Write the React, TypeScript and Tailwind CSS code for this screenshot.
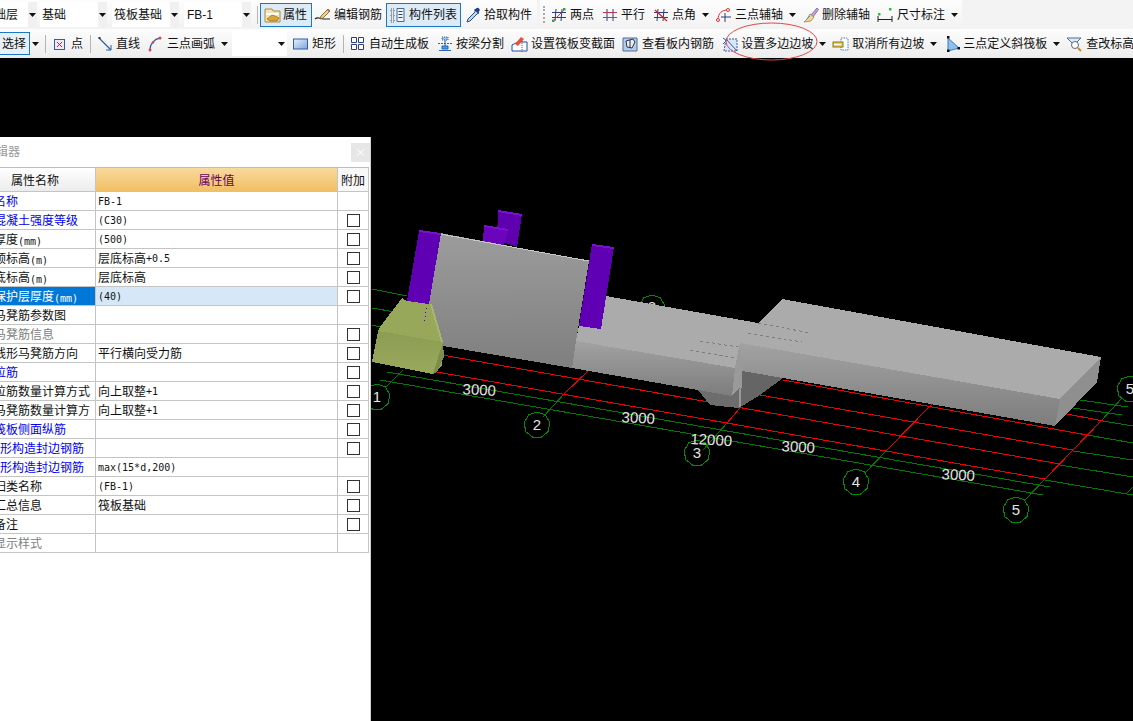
import React from "react";

const Blue = "#2f5fa8";

const Ic = ({ w = 16, children }: { w?: number; children: React.ReactNode }) => (
  <svg width={w} height={16} viewBox={`0 0 ${w} 16`} className="shrink-0" fill="none">
    {children}
  </svg>
);

const Arrow = ({ className = "" }: { className?: string }) => (
  <svg width="7" height="4" viewBox="0 0 7 4" className={`shrink-0 ${className}`}>
    <path d="M0 0h7L3.5 4z" fill="#111" />
  </svg>
);

const Combo = ({ label, className = "", textClass = "pl-[2px]" }: { label: string; className?: string; textClass?: string }) => (
  <div className={`h-[25px] flex items-center justify-between bg-white shrink-0 overflow-hidden ${className}`}>
    <span className={`whitespace-nowrap ${textClass}`}>{label}</span>
    <span className="w-[9px] h-full bg-[#f0f0f0] flex items-center justify-center">
      <Arrow />
    </span>
  </div>
);

const Tool = ({
  icon,
  label,
  className = "",
  gap = "gap-[3px]",
  arrow = false,
}: {
  icon: React.ReactNode;
  label: string;
  className?: string;
  gap?: string;
  arrow?: boolean;
}) => (
  <div className={`flex items-center shrink-0 whitespace-nowrap ${className}`}>
    <div className={`flex items-center ${gap}`}>
      {icon}
      <span>{label}</span>
    </div>
    {arrow && <Arrow className="ml-[6px]" />}
  </div>
);

const Sep = ({ className = "" }: { className?: string }) => <div className={`w-px h-[18px] bg-[#b5b5b5] shrink-0 ${className}`} />;

const Hash = ({ c = "#2a3f7a" }: { c?: string }) => (
  <path d="M5 2L4 14M11 2L10 14M1 5.5H15M1 10.5H15" stroke={c} strokeWidth="1" />
);

const icons = {
  attr: (
    <Ic w={17}>
      <path d="M1 2h7l1 2h7v11H1z" fill="#f7e3b0" stroke="#a98a4a" />
      <path d="M2 6h13v2H2z" fill="#fff" />
      <path d="M3 12l5-4 3 1 4 2-2 3H6z" fill="#d9a53a" stroke="#8a6a20" strokeWidth=".7" />
    </Ic>
  ),
  edit: (
    <Ic w={17}>
      <path d="M1 12c3-3 5 0 8 0h7" stroke="#222" strokeWidth="1.2" />
      <path d="M7 9l7-7 2 2-7 7-3 1z" fill="#f3d27a" stroke="#6b5a2a" strokeWidth=".8" />
      <path d="M13 3l2 2 1-1-2-2z" fill="#d9534f" />
    </Ic>
  ),
  list: (
    <Ic w={15}>
      <path d="M1 2h3v3H1zM1 7h3v3H1zM1 12h3v3H1z" stroke="#555" strokeDasharray="1 1" />
      <path d="M7 1.5h7v13H7z" fill="#eef4fb" stroke="#4a6a90" />
      <path d="M8.5 4.5h4M8.5 7.5h4M8.5 10.5h4" stroke="#345" />
    </Ic>
  ),
  pick: (
    <Ic w={15}>
      <path d="M9 2l4 4-2 1-7 7-3 1 1-3 7-7z" fill="#bcd9f5" stroke="#234e8e" />
      <path d="M10 1.5c1-1 2-1 3 0s1 2 0 3l-1.5 1.5-3-3z" fill="#1d3f8a" />
    </Ic>
  ),
  twoPt: (
    <Ic>
      <Hash />
      <path d="M2 14L14 2" stroke="#d33" />
      <rect x="1" y="12.5" width="2.5" height="2.5" fill="#3a3" />
      <rect x="12" y="1" width="2.5" height="2.5" fill="#3a3" />
    </Ic>
  ),
  parallel: (
    <Ic>
      <path d="M5 2V14M11 2V14" stroke="#2a3f7a" />
      <path d="M1 5.5H15M1 10.5H15" stroke="#c0394a" />
    </Ic>
  ),
  angle: (
    <Ic>
      <Hash />
      <path d="M2 3L14 14" stroke="#d22" strokeWidth="1.3" />
    </Ic>
  ),
  arcAxis: (
    <Ic>
      <path d="M2 13C2 6 6 3 12 3" stroke="#d33" />
      <circle cx="12" cy="3" r="1.5" fill="#fff" stroke="#d33" />
      <circle cx="2" cy="13" r="1.5" fill="#fff" stroke="#d33" />
      <path d="M9 6V15M5 10H15" stroke="#2a3f7a" />
    </Ic>
  ),
  del: (
    <Ic w={17}>
      <path d="M9 8l6-7 1.5 1.5L11 10z" fill="#c9a2d8" stroke="#6a4a90" strokeWidth=".7" />
      <path d="M8 7l4 3-3 4-7 1c3-2 4-5 6-8z" fill="#f3d894" stroke="#8a7a40" strokeWidth=".7" />
      <path d="M4 13l4-4" stroke="#5a8fd0" />
    </Ic>
  ),
  dim: (
    <Ic>
      <path d="M1 9v6M15 9v6M1 12.5H15" stroke="#222" />
      <path d="M5 12.5h6" stroke="#222" strokeDasharray="1 1" />
      <rect x="1" y="6" width="2.5" height="2.5" fill="#3b3" />
      <rect x="12" y="1" width="2.5" height="2.5" fill="#3b3" />
    </Ic>
  ),
  point: (
    <Ic w={11}>
      <rect x=".5" y="3.5" width="10" height="10" fill="#e6ecf8" stroke={Blue} />
      <path d="M3 6l5 5M8 6l-5 5" stroke="#d22" />
    </Ic>
  ),
  line: (
    <Ic w={14}>
      <path d="M1 2L13 14" stroke="#2c5fa5" strokeWidth="1.3" />
      <path d="M8 14h5V9" stroke="#2c5fa5" />
      <rect x=".5" y="1" width="2" height="2" fill="#333" />
    </Ic>
  ),
  arc: (
    <Ic w={14}>
      <path d="M2 14C2 8 6 3 12 2" stroke="#2c5fa5" strokeWidth="1.3" />
      <circle cx="2" cy="14" r="1.5" fill="#d44" />
      <circle cx="12" cy="2" r="1.5" fill="#d44" />
      <circle cx="5" cy="6.5" r="1.2" fill="#d44" />
    </Ic>
  ),
  rect: (
    <Ic w={15}>
      <defs>
        <linearGradient id="rg" x1="0" y1="0" x2="1" y2="1">
          <stop offset="0" stopColor="#e8f0fb" />
          <stop offset="1" stopColor="#7ea4dc" />
        </linearGradient>
      </defs>
      <rect x=".5" y="3" width="14" height="10" fill="url(#rg)" stroke="#2f5fa8" />
    </Ic>
  ),
  auto: (
    <Ic w={13}>
      <path d="M.5 1.5h5v5h-5zM7.5 1.5h5v5h-5zM.5 8.5h5v5h-5zM7.5 8.5h5v5h-5z" fill="#fff" stroke="#2a3f7a" />
    </Ic>
  ),
  split: (
    <Ic>
      <path d="M5 1h6v3H5z" fill="#9cc3ee" stroke="#2a66b5" strokeDasharray="1 1" />
      <path d="M1 7.5H15" stroke="#2a66b5" strokeDasharray="2 1" />
      <path d="M5 10h6v3H5z" fill="#5a93d8" stroke="#2a66b5" />
      <path d="M2 14.5H14" stroke="#2a66b5" />
      <path d="M8 4v6" stroke="#2a66b5" />
    </Ic>
  ),
  section: (
    <Ic w={17}>
      <path d="M1 15V9l6-3h9v9z" fill="#fff" stroke="#1d4f9c" />
      <path d="M4 8l6-7 3 2-6 7z" fill="#e8503a" />
      <path d="M11 5v11" stroke="#d22" strokeDasharray="1 1" />
    </Ic>
  ),
  rebar: (
    <Ic>
      <path d="M1 2h14v13H1z" fill="#b6cbe6" stroke="#4b6e9c" />
      <path d="M4 5l7-2 2 3-3 6-5-1z" fill="#e6eef8" stroke="#334" />
      <path d="M8 4v8" stroke="#334" />
    </Ic>
  ),
  slope: (
    <Ic>
      <path d="M4 3h11v12H2z" fill="#d9e6f6" stroke="#2f5fa8" strokeDasharray="2 1" />
      <path d="M4 3l11 12" stroke="#2f5fa8" />
      <path d="M1 2l4 3M1 8l3-3" stroke="#2f5fa8" />
    </Ic>
  ),
  cancel: (
    <Ic w={17}>
      <path d="M9 2h6l1 1v11H9z" fill="#fff" stroke="#4a78b8" strokeDasharray="1.5 1" />
      <rect x="1" y="6" width="10" height="5" fill="#f4cf3f" stroke="#8a7420" />
      <path d="M2 8.5h7" stroke="#fff" />
    </Ic>
  ),
  tri: (
    <Ic w={14}>
      <path d="M2 2l11 10-11 3z" fill="#8fc0ec" stroke="#3d78bd" />
      <rect x="1" y="0" width="2.5" height="2.5" fill="#111" />
      <rect x="11.5" y="11" width="2.5" height="2.5" fill="#111" />
      <rect x="1" y="13.5" width="2.5" height="2.5" fill="#111" />
    </Ic>
  ),
  find: (
    <Ic>
      <path d="M1 2h14L9 8v3H7V8z" fill="#dfe8f4" stroke="#4b6e9c" />
      <circle cx="9" cy="9" r="3.5" fill="#fff" stroke="#667" />
      <path d="M12 12l3 3" stroke="#c88a2a" strokeWidth="2" />
    </Ic>
  ),
};

const Toolbar = () => (
  <div className="shrink-0 h-[58px] bg-[#f3f3f3] text-[12px] leading-none text-[#111] [font-family:'Liberation_Sans','Noto_Sans_CJK_SC',sans-serif]">
    <div className="h-[29px] flex items-center">
      <div className="h-full flex items-center bg-gradient-to-b from-[#fdfdfd] to-[#f2f2f2] w-[537px] shrink-0">
        <Combo label="础层" className="w-[37px]" textClass="-ml-[6px]" />
        <Combo label="基础" className="w-[67px] ml-[3px]" />
        <Combo label="筏板基础" className="w-[67px] ml-[5px]" />
        <Combo label="FB-1" className="w-[67px] ml-[5px]" textClass="pl-[3px]" />
        <Sep className="ml-[6px]" />
        <div className="ml-[2px] w-[52px] h-[24px] border border-[#1c78c4] bg-[#dcebf6] flex items-center pl-[3px] gap-[2px] shrink-0">
          {icons.attr}
          <span>属性</span>
        </div>
        <Tool className="ml-[2px]" icon={icons.edit} label="编辑钢筋" />
        <div className="ml-[4px] w-[75px] h-[24px] border border-[#1c78c4] bg-[#dcebf6] flex items-center pl-[3px] gap-[4px] shrink-0">
          {icons.list}
          <span>构件列表</span>
        </div>
        <Tool className="ml-[5px]" icon={icons.pick} label="拾取构件" />
      </div>
      <div className="h-full ml-[3px] flex items-center bg-gradient-to-b from-[#fdfdfd] to-[#f2f2f2] w-[422px] shrink-0">
        <div className="ml-[3px] w-[3px] h-[17px] shrink-0 border-l-2 border-dotted border-[#aaa]" />
        <Tool className="ml-[5px]" icon={icons.twoPt} label="两点" />
        <Tool className="ml-[8px]" icon={icons.parallel} label="平行" />
        <Tool className="ml-[8px]" icon={icons.angle} label="点角" arrow />
        <Tool className="ml-[7px]" icon={icons.arcAxis} label="三点辅轴" arrow />
        <Tool className="ml-[6px]" icon={icons.del} label="删除辅轴" />
        <Tool className="ml-[7px]" gap="gap-[4px]" icon={icons.dim} label="尺寸标注" arrow />
      </div>
    </div>
    <div className="h-[29px] flex items-center bg-gradient-to-b from-[#fdfdfd] to-[#ececec] overflow-hidden">
      <div className="-ml-px w-[31px] h-[23px] border border-[#1c78c4] bg-[#e6f0f8] flex items-center pl-[2px] shrink-0">选择</div>
      <Arrow className="ml-[2px]" />
      <Sep className="ml-[6px]" />
      <Tool className="ml-[8px]" gap="gap-[6px]" icon={icons.point} label="点" />
      <Sep className="ml-[7px]" />
      <Tool className="ml-[7px]" gap="gap-[4px]" icon={icons.line} label="直线" />
      <Tool className="ml-[8px]" gap="gap-[5px]" icon={icons.arc} label="三点画弧" arrow />
      <div className="ml-[4px] w-[55px] h-[25px] bg-white flex items-center justify-end pr-[2px] shrink-0">
        <Arrow />
      </div>
      <Tool className="ml-[6px]" gap="gap-[4px]" icon={icons.rect} label="矩形" />
      <Sep className="ml-[7px]" />
      <Tool className="ml-[7px]" gap="gap-[5px]" icon={icons.auto} label="自动生成板" />
      <Tool className="ml-[8px]" icon={icons.split} label="按梁分割" />
      <Tool className="ml-[7px]" icon={icons.section} label="设置筏板变截面" />
      <Tool className="ml-[7px]" gap="gap-[4px]" icon={icons.rebar} label="查看板内钢筋" />
      <Tool className="ml-[8px]" icon={icons.slope} label="设置多边边坡" arrow />
      <Tool className="ml-[6px]" icon={icons.cancel} label="取消所有边坡" arrow />
      <Tool className="ml-[9px]" icon={icons.tri} label="三点定义斜筏板" arrow />
      <Tool className="ml-[6px]" gap="gap-[4px]" icon={icons.find} label="查改标高" />
    </div>
  </div>
);

const Mixed = ({ text }: { text: string }) => (
  <>
    {text.split(/([\x00-\x7f]+)/).map((p, i) =>
      /^[\x00-\x7f]+$/.test(p) ? (
        <span key={i} className="inline-block translate-y-px text-[10px] [font-family:'DejaVu_Sans_Mono',monospace]">
          {p}
        </span>
      ) : (
        <span key={i}>{p}</span>
      ),
    )}
  </>
);

type Row = { n: string; v?: string; c?: "blue" | "gray"; box?: boolean; sel?: boolean };

const rows: Row[] = [
  { n: "名称", v: "FB-1", c: "blue", box: false },
  { n: "混凝土强度等级", v: "(C30)", c: "blue" },
  { n: "厚度(mm)", v: "(500)" },
  { n: "顶标高(m)", v: "层底标高+0.5" },
  { n: "底标高(m)", v: "层底标高" },
  { n: "保护层厚度(mm)", v: "(40)", sel: true },
  { n: "马凳筋参数图", box: false },
  { n: "马凳筋信息", c: "gray" },
  { n: "线形马凳筋方向", v: "平行横向受力筋" },
  { n: "拉筋", c: "blue" },
  { n: "拉筋数量计算方式", v: "向上取整+1" },
  { n: "马凳筋数量计算方", v: "向上取整+1" },
  { n: "筏板侧面纵筋", c: "blue" },
  { n: "U形构造封边钢筋", c: "blue" },
  { n: "U形构造封边钢筋", v: "max(15*d,200)", c: "blue", box: false },
  { n: "归类名称", v: "(FB-1)" },
  { n: "汇总信息", v: "筏板基础" },
  { n: "备注" },
  { n: "显示样式", c: "gray", box: false },
];

const Panel = () => (
  <div className="w-[371px] shrink-0 pt-[79px]">
    <div className="h-full bg-white border-r border-[#d0d0d0] text-[12px] leading-none text-[#111] [font-family:'Noto_Sans_CJK_SC',sans-serif]">
      <div className="h-[30px] flex items-center justify-between overflow-hidden">
        <span className="-ml-[4px] -mt-[2px] text-[#9a9a9a]">辑器</span>
        <span className="w-[19px] h-[19px] mt-[1px] bg-[#e6e6e6] flex items-center justify-center text-[11px] text-white">×</span>
      </div>
      <div className="w-[369px] border-t border-[#bdbdbd]">
        <div className="grid grid-cols-[96px_242px_31px] h-[24px] border-b border-[#c4c4c4]">
          <div className="border-r border-[#c4c4c4] bg-gradient-to-b from-white to-[#ececec] flex items-center pl-[11px]">属性名称</div>
          <div className="border-r border-[#c4c4c4] bg-gradient-to-b from-[#f9d99d] to-[#f1bf63] flex items-center justify-center text-[#660066]">属性值</div>
          <div className="border-r border-[#c4c4c4] bg-[#f8f8f8] flex items-center justify-center">附加</div>
        </div>
        {rows.map((r, i) => (
          <div key={i} className="grid grid-cols-[96px_242px_31px] h-[19px] border-b border-[#c4c4c4]">
            <div
              className={`border-r border-[#c4c4c4] overflow-hidden flex items-center whitespace-nowrap ${
                r.sel ? "bg-[#0078d7] text-white" : r.c === "blue" ? "text-[#0000ee]" : r.c === "gray" ? "text-[#808080]" : ""
              }`}
            >
              <span className="-ml-[6px]">
                <Mixed text={r.n} />
              </span>
            </div>
            <div className={`border-r border-[#c4c4c4] flex items-center pl-[2px] whitespace-nowrap ${r.sel ? "bg-[#d6e8f7]" : ""}`}>
              {r.v && <Mixed text={r.v} />}
            </div>
            <div className="border-r border-[#c4c4c4] flex items-center justify-center pl-[1px]">
              {r.box !== false && <div className="w-[13px] h-[13px] border border-[#333] bg-white" />}
            </div>
          </div>
        ))}
      </div>
    </div>
  </div>
);

const G = "#007a00";
const R = "#f00000";

const gridGreen: number[][] = [
  [372, 289, 407, 296],
  [372, 308, 395, 312],
  [372, 325, 380, 327],
  [387, 372, 1050, 487],
  [380, 380, 1043, 495],
  [1080, 400, 1128, 407],
  [1073, 408, 1122, 415],
  [1103, 421, 1133, 426],
  [1087, 435, 1133, 443],
  [1073, 451, 1133, 460],
  [1060, 465, 1133, 477],
  [1045, 480, 1133, 495],
  [403, 370, 385, 388],
  [565, 393, 543, 417],
  [727, 423, 703, 450],
  [887, 450, 865, 473],
  [1045, 479, 1025, 500],
  [1122, 398, 1102, 420],
  [1127, 493, 1133, 487],
];

const gridRed: number[][] = [
  [783, 380, 1087, 435],
  [760, 395, 1073, 450],
  [442, 355, 1060, 464],
  [437, 372, 1045, 479],
  [1067, 414, 1103, 421],
  [588, 371, 565, 393],
  [740, 408, 727, 423],
  [932, 404, 887, 450],
  [1102, 420, 1045, 479],
];

const circles: [number, number, string][] = [
  [377, 397, "1"],
  [537, 425, "2"],
  [697, 453, "3"],
  [856, 482, "4"],
  [1016, 510, "5"],
  [652, 308, "2"],
  [1130, 389, "5"],
];

const dims: [number, number, string][] = [
  [479, 395, "3000"],
  [638, 423, "3000"],
  [798, 452, "3000"],
  [958, 480, "3000"],
  [711, 445, "12000"],
];

const ring = (x: number, y: number) =>
  Array.from({ length: 9 }, (_, i) => {
    const a = (i / 9) * Math.PI * 2 - Math.PI / 2;
    return `${(x + 13 * Math.cos(a)).toFixed(1)},${(y + 13 * Math.sin(a)).toFixed(1)}`;
  }).join(" ");

const Canvas = () => (
  <svg width={762} height={663} viewBox="371 58 762 663" className="shrink-0 bg-black" shapeRendering="crispEdges">
    <defs>
      <linearGradient id="wall" x1="0" y1="0" x2="0" y2="1">
        <stop offset="0" stopColor="#9c9c9c" />
        <stop offset="1" stopColor="#7f7f7f" />
      </linearGradient>
      <linearGradient id="front" x1="0" y1="0" x2="0" y2="1">
        <stop offset="0" stopColor="#a2a2a2" />
        <stop offset="1" stopColor="#7d7d7d" />
      </linearGradient>
      <linearGradient id="greenFront" x1="0" y1="0" x2="0" y2="1">
        <stop offset="0" stopColor="#8c9c52" />
        <stop offset="1" stopColor="#99a95c" />
      </linearGradient>
    </defs>
    {gridGreen.map((l, i) => (
      <line key={i} x1={l[0]} y1={l[1]} x2={l[2]} y2={l[3]} stroke={G} />
    ))}
    {gridRed.map((l, i) => (
      <line key={i} x1={l[0]} y1={l[1]} x2={l[2]} y2={l[3]} stroke={R} />
    ))}
    {circles.map(([x, y], i) => (
      <polygon key={i} points={ring(x, y)} fill="none" stroke="#008c00" />
    ))}
    <text x="652" y="312" fill="#e4e4e4" fontSize="15" textAnchor="middle" shapeRendering="auto" className="[font-family:'Liberation_Sans',sans-serif]">
      2
    </text>

    <polygon points="498,210 522,214 517,247 497,240" fill="#5f00b0" />
    <polygon points="498,210 522,214 522,216 498,212" fill="#7a10d0" />
    <polygon points="484,225 508,229 504,245 483,242" fill="#6a04bd" />
    <polygon points="484,225 508,229 508,231 484,227" fill="#7a10d0" />

    <polygon points="440,233 589,261 576,341 572,368 443,346 429,304" fill="url(#wall)" />
    <line x1="440" y1="234" x2="589" y2="261" stroke="#c8c8c8" />

    <polygon points="606,296 758,323 740,343 735,368 576,341 579,326 601,329" fill="#ababab" />
    <polygon points="576,341 735,368 732,396 698,390 572,368" fill="url(#front)" />
    <polygon points="698,390 732,396 740,387 739,408 710,405" fill="#6d6d6d" />
    <polygon points="740,343 742,371 740,387 732,396 735,368" fill="#9a9a9a" />
    <polygon points="742,371 783,378 760,395 739,408 740,387" fill="#656565" />
    <line x1="741" y1="371" x2="740" y2="407" stroke="#999" strokeWidth="2" />

    <polygon points="782,299 1101,357 1060,399 740,343 758,323" fill="#ababab" />
    <polygon points="740,343 1060,399 1055,426 783,378 742,371" fill="url(#front)" />
    <polygon points="1101,357 1097,382 1055,426 1060,399" fill="#8f8f8f" />
    <g stroke="#7d7d7d" strokeDasharray="3 3">
      <line x1="758" y1="323" x2="810" y2="333" />
      <line x1="748" y1="333" x2="802" y2="342" />
      <line x1="700" y1="341" x2="738" y2="347" />
      <line x1="690" y1="350" x2="735" y2="358" />
    </g>

    <polygon points="419,231 441,233 429,304 407,301" fill="#6000b4" />
    <polygon points="419,230 441,233 441,235 419,232" fill="#7a10d0" />
    <polygon points="592,244 614,247 601,329 579,326" fill="#6000b4" />
    <polygon points="592,244 614,247 614,249 592,246" fill="#7a10d0" />

    <polygon points="402,298 407,301 429,304 432,304 443,342 378,331 380,327" fill="#97a85b" />
    <polygon points="378,331 443,342 442,365 433,374 372,362" fill="url(#greenFront)" />
    <polygon points="443,342 444,357 437,372 433,374" fill="#7e8d4a" />
    <polygon points="432,304 443,342 441,342 430,304" fill="#a7b56d" />
    <line x1="427" y1="308" x2="424" y2="321" stroke="#6000b4" strokeDasharray="1 3" />

    <g shapeRendering="auto" fill="#e4e4e4" fontSize="15" textAnchor="middle" className="[font-family:'Liberation_Sans',sans-serif]">
      {circles.map(([x, y, t], i) =>
        i === 5 ? null : (
          <text key={i} x={x} y={y + 5}>
            {t}
          </text>
        ),
      )}
      {dims.map(([x, y, t], i) => (
        <text key={i} x={x} y={y} transform={`rotate(3 ${x} ${y})`}>
          {t}
        </text>
      ))}
    </g>
  </svg>
);

export default function App() {
  return (
    <div className="relative w-[1133px] h-[721px] overflow-hidden bg-black flex flex-col">
      <Toolbar />
      <div className="flex-1 min-h-0 flex">
        <Panel />
        <Canvas />
      </div>
      <svg width="100" height="42" viewBox="0 0 100 42" className="absolute left-[722px] top-[21px]">
        <ellipse cx="49.5" cy="20.5" rx="45.5" ry="18.5" fill="none" stroke="#e2484a" />
      </svg>
    </div>
  );
}
